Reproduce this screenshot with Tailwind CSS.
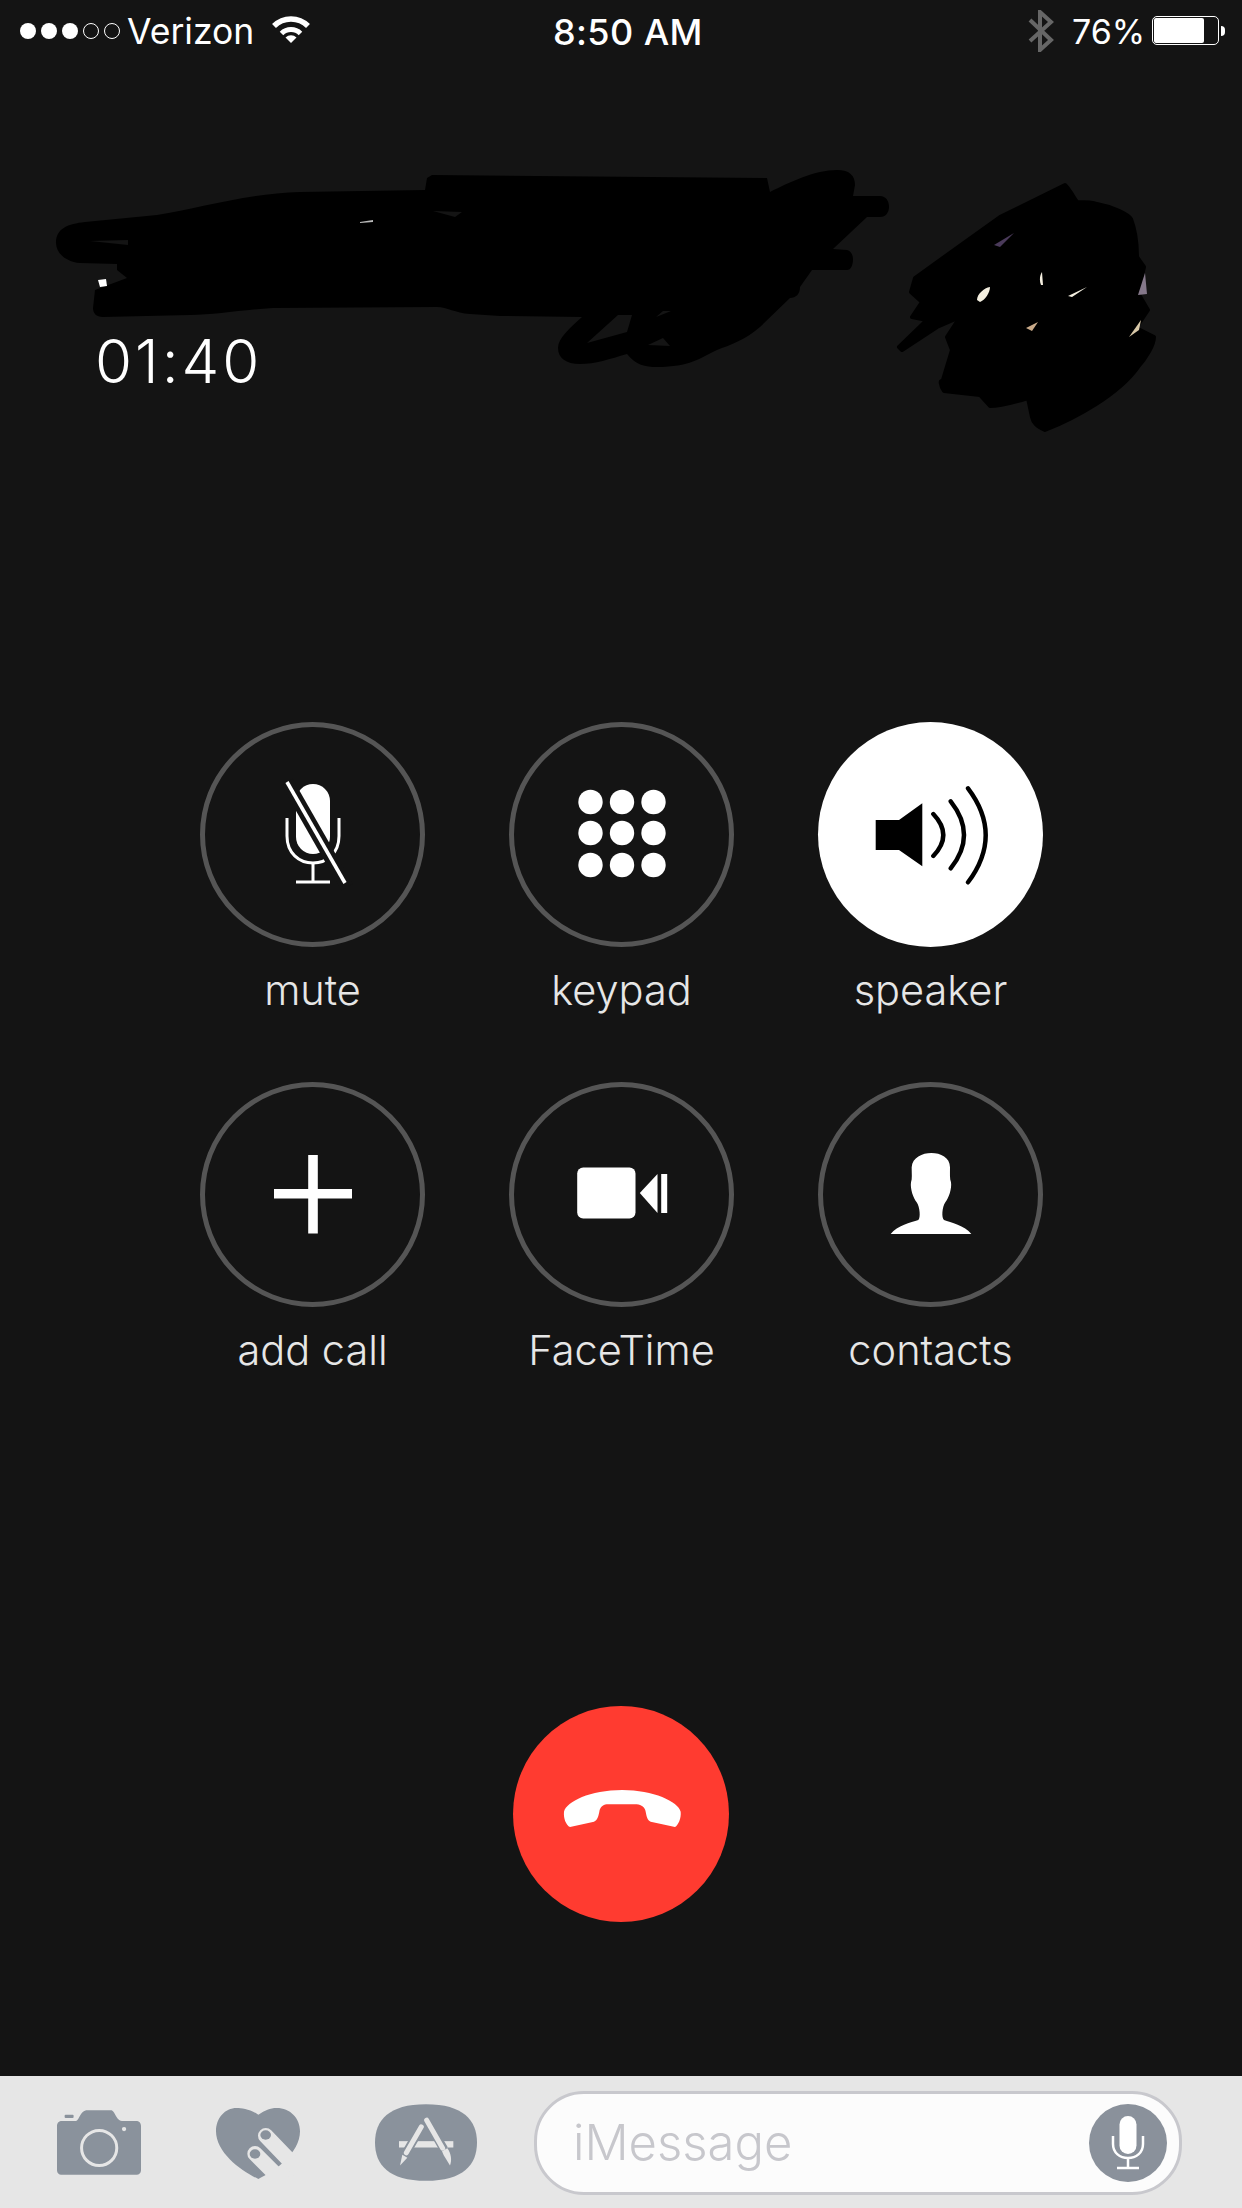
<!DOCTYPE html>
<html lang="en">
<head>
    <meta charset="utf-8"/>
    <title>Call</title>
    <script src="https://cdn.jsdelivr.net/npm/@tailwindcss/browser@4"></script>
</head>
<body class="bg-[#141414]">
<div class="relative flex flex-col w-[1242px] h-[2208px] overflow-hidden bg-[#141414] text-white font-['Inter',sans-serif]">

    <!-- status bar -->
    <div class="flex items-center h-[61px] shrink-0">
        <div class="flex items-center w-[553px] pl-[20px]">
            <div class="flex gap-[5px]">
                <span class="w-4 h-4 rounded-full bg-white"></span>
                <span class="w-4 h-4 rounded-full bg-white"></span>
                <span class="w-4 h-4 rounded-full bg-white"></span>
                <span class="w-4 h-4 rounded-full border border-white"></span>
                <span class="w-4 h-4 rounded-full border border-white"></span>
            </div>
            <span class="ml-[7px] mt-[2px] text-[35.5px] leading-[40px]">Verizon</span>
            <svg class="ml-[18px] -mt-[2px]" width="38" height="28" viewBox="-19 -27 38 28">
                <path d="M-17 -17 A24 24 0 0 1 17 -17" fill="none" stroke="#fff" stroke-width="5.5"/>
                <path d="M-9.5 -9.5 A13.5 13.5 0 0 1 9.5 -9.5" fill="none" stroke="#fff" stroke-width="5"/>
                <path d="M0 0 L-5.5 -5.5 A8 8 0 0 1 5.5 -5.5 Z" fill="#fff"/>
            </svg>
        </div>
        <div class="w-[148px] mt-[2px] text-center text-[36px] tracking-[0.4px] leading-[40px] font-medium whitespace-nowrap">8:50 AM</div>
        <div class="flex items-center ml-[327px]">
            <svg width="26" height="42" viewBox="1028 10 26 42">
                <path d="M1030 20 L1051 40 L1040 50 V12 L1051 22 L1030 41" fill="none" stroke="#666" stroke-width="4"/>
            </svg>
            <span class="ml-[18px] mt-[2px] text-[34px] leading-[40px] w-[70px] whitespace-nowrap">76%</span>
            <div class="ml-[10px] w-[67px] h-[29px] rounded-[5px] border border-white p-px">
                <div class="w-[50px] h-full bg-white rounded-[2px]"></div>
            </div>
            <div class="ml-[2px] w-[4px] h-[10px] rounded-r-full bg-white"></div>
        </div>
    </div>

    <!-- caller -->
    <div class="mt-[270px] ml-[95px] h-[60px] text-[60px] leading-[60px] tracking-[3px] font-light">01:40</div>

    <!-- redacted name and photo -->
    <svg class="absolute left-0 top-0" width="1242" height="440" viewBox="0 0 1242 440">
        <path fill="#000" d="M56 243 C56 228 68 224 85 222 L157 215 C200 208 250 193 300 192 L425 190 L427 178 L432 175 L767 178 L770 192 C790 182 815 170 837 170 C850 170 855 176 855 185 L853 196 L880 196 C886 196 889 201 889 207 C889 212 886 217 880 217 L867 217 L833 249 L847 250 C851 251 853 255 853 259 C853 265 851 270 847 270 L812 270 L800 287 C800 294 796 298 790 298 L760 327 C745 340 730 345 717 350 C700 358 690 367 657 367 C645 367 636 365 627 354 C610 359 595 364 580 364 C566 364 558 358 558 348 C558 338 570 328 582 317 L500 316 L470 314 C455 313 447 307 437 307 L273 308 C240 310 215 315 190 315 L103 317 C96 317 93 313 93 308 L95 290 L127 278 L117 270 L117 264 L80 263 C66 262 56 253 56 243 Z"/>
        <path fill="#141414" d="M587 343 L618 315 L632 315 L627 332 Z M648 345 L663 338 L670 346 Z M656 317 L663 311 L671 311 Z M90 241 L128 240 L128 245 Z M433 211 L462 212 L455 217 Z"/>
        <path fill="#fff" d="M98 280 L106 279 L107 286 L100 287 Z"/>
        <path fill="#bbb" d="M360 222 L373 220 L373 222 L360 223 Z"/>
        <path fill="#000" stroke="#000" stroke-width="4" stroke-linejoin="round" d="M1065 185 C1070 190 1074 198 1077 202 C1085 202 1092 202 1097 204 C1113 207 1128 214 1131 219 C1136 232 1137 245 1137 257 L1144 267 L1138 293 L1148 310 L1136 328 L1154 337 C1154 345 1146 358 1138 367 C1118 395 1075 418 1045 430 C1037 426 1033 423 1032 417 L1028 398 C1012 403 1000 406 990 406 L980 395 L944 391 C940 385 940 378 942 383 L952 350 L947 337 L960 317 L937 327 L902 350 L899 347 L927 320 L912 317 L922 302 L911 292 L915 278 L1000 217 Z"/>
        <path fill="#4a3a5a" d="M994 245 L1014 233 L1000 247 Z"/>
        <path fill="#f4efe0" d="M977 300 C977 294 984 288 990 287 C990 293 985 300 980 302 Z M1041 285 C1039 280 1040 275 1042 272 L1043 285 Z M1068 296 L1087 287 L1072 297 Z"/>
        <path fill="#c9aa8a" d="M1026 328 L1038 322 L1032 331 Z"/>
        <path fill="#85788a" d="M1138 295 L1145 273 L1147 294 Z"/>
        <path fill="#d8c8a8" d="M1129 337 L1141 320 L1139 330 Z"/>
    </svg>

    <!-- call controls -->
    <div class="mt-[331px] ml-[200px] grid grid-cols-[225px_225px_225px] gap-x-[84px] auto-rows-[360px]">
        <div class="flex flex-col items-center">
            <div class="flex items-center justify-center w-[225px] h-[225px] rounded-full border-[5px] border-[#555]">
                <svg width="160" height="160" viewBox="-80 -80 160 160">
                    <rect x="-17" y="-51" width="34" height="70" rx="17" fill="#fff"/>
                    <path d="M-26 -17 V1 C-26 18 -14 28 0 28 C14 28 26 18 26 1 V-17" fill="none" stroke="#fff" stroke-width="3"/>
                    <path d="M0 28 V47 M-17 47 H17" fill="none" stroke="#fff" stroke-width="3"/>
                    <path d="M-26 -53 L34 52" stroke="#141414" stroke-width="13"/>
                    <path d="M-26 -53 L32 48" stroke="#fff" stroke-width="3.6"/>
                </svg>
            </div>
            <span class="mt-[19px] text-[41.5px] leading-[48px] font-[350] text-[#e6e6e6]">mute</span>
        </div>
        <div class="flex flex-col items-center">
            <div class="flex items-center justify-center w-[225px] h-[225px] rounded-full border-[5px] border-[#555]">
                <svg width="100" height="100" viewBox="-50 -50 100 100" fill="#fff">
                    <circle cx="-31.5" cy="-33" r="12.2"/><circle cx="0" cy="-33" r="12.2"/><circle cx="31.5" cy="-33" r="12.2"/>
                    <circle cx="-31.5" cy="-2" r="12.2"/><circle cx="0" cy="-2" r="12.2"/><circle cx="31.5" cy="-2" r="12.2"/>
                    <circle cx="-31.5" cy="30" r="12.2"/><circle cx="0" cy="30" r="12.2"/><circle cx="31.5" cy="30" r="12.2"/>
                </svg>
            </div>
            <span class="mt-[19px] text-[41.5px] leading-[48px] font-[350] text-[#e6e6e6]">keypad</span>
        </div>
        <div class="flex flex-col items-center">
            <div class="flex items-center justify-center w-[225px] h-[225px] rounded-full bg-white">
                <svg width="130" height="110" viewBox="-65 -55 130 110">
                    <path d="M-55.3 -15 H-32 L-8.7 -31.7 V31.3 L-32 15 H-55.3 Z" fill="#000"/>
                    <path d="M2.3 -21 Q22.3 0 2.3 21 M19.7 -33.7 Q46.3 0 19.7 33.3 M37 -46.7 Q72.4 0 37 47.3" fill="none" stroke="#000" stroke-width="4.4" stroke-linecap="round"/>
                </svg>
            </div>
            <span class="mt-[19px] text-[41.5px] leading-[48px] font-[350] text-[#e6e6e6]">speaker</span>
        </div>
        <div class="flex flex-col items-center">
            <div class="flex items-center justify-center w-[225px] h-[225px] rounded-full border-[5px] border-[#555]">
                <svg width="100" height="100" viewBox="-50 -50 100 100" fill="#fff">
                    <rect x="-39" y="-6" width="78" height="9.5"/>
                    <rect x="-4.8" y="-40" width="9.6" height="78.5"/>
                </svg>
            </div>
            <span class="mt-[19px] text-[41.5px] leading-[48px] font-[350] text-[#e6e6e6]">add call</span>
        </div>
        <div class="flex flex-col items-center">
            <div class="flex items-center justify-center w-[225px] h-[225px] rounded-full border-[5px] border-[#555]">
                <svg width="100" height="70" viewBox="-50 -35 100 70" fill="#fff">
                    <rect x="-44.8" y="-27.5" width="58.3" height="51" rx="6"/>
                    <path d="M17.8 -2 L35.5 -21 V18 Z"/>
                    <rect x="39.2" y="-21" width="6" height="39"/>
                </svg>
            </div>
            <span class="mt-[19px] text-[41.5px] leading-[48px] font-[350] text-[#e6e6e6]">FaceTime</span>
        </div>
        <div class="flex flex-col items-center">
            <div class="flex items-center justify-center w-[225px] h-[225px] rounded-full border-[5px] border-[#555]">
                <svg width="100" height="100" viewBox="781 253 300 300">
                    <path fill="#fff" d="M810 520 C830 495 870 485 893 478 C900 472 898 440 888 425 C878 412 868 385 871 365 C875 355 873 340 873 320 C875 290 905 277 932 277 C960 277 988 290 988 320 C988 340 987 355 991 365 C994 385 984 412 974 425 C964 440 962 472 970 478 C990 485 1032 495 1052 520 Z"/>
                </svg>
            </div>
            <span class="mt-[19px] text-[41.5px] leading-[48px] font-[350] text-[#e6e6e6]">contacts</span>
        </div>
    </div>

    <!-- end call -->
    <div class="mt-[264px] mx-auto flex items-center justify-center w-[216px] h-[216px] rounded-full bg-[#ff3b30]">
        <svg width="216" height="216" viewBox="69 48 648 648">
            <path fill="#fff" d="M240 411 C228 405 220 385 222 365 C230 335 300 300 397 300 C490 300 565 335 572 365 C574 385 565 405 555 411 L482 395 C472 390 470 380 467 365 C465 352 455 345 440 343 L350 343 C338 345 330 352 328 365 C325 380 322 390 312 395 Z"/>
        </svg>
    </div>

    <!-- keyboard bar -->
    <div class="mt-auto flex items-center h-[132px] pl-[57px] bg-[#e6e6e6]">
        <svg width="84" height="65" viewBox="170 147 253 195">
            <path fill="#8a929c" d="M185 180 H225 C238 180 238 147 262 147 H332 C346 147 346 180 370 180 H408 C417 180 423 186 423 195 V327 C423 336 417 342 408 342 H185 C176 342 170 336 170 327 V195 C170 186 176 180 185 180 Z"/>
            <rect x="193" y="161" width="27" height="10" rx="3" fill="#8a929c"/>
            <circle cx="297" cy="261" r="53" fill="none" stroke="#e6e6e6" stroke-width="9"/>
            <circle cx="372" cy="204" r="6.5" fill="#e6e6e6"/>
        </svg>
        <svg class="ml-[75px] mt-[3px]" width="84" height="71" viewBox="648 145 252 213">
            <path fill="#8a929c" d="M775 165 C750 148 725 145 710 145 C675 145 648 175 648 215 C648 280 725 335 775 358 C825 335 900 280 900 215 C900 175 870 145 830 145 C810 145 795 152 775 165 Z"/>
            <path d="M797 228 L900 335 M765 282 L860 377" stroke="#e6e6e6" stroke-width="46" stroke-linecap="round" fill="none"/>
            <ellipse cx="797" cy="226" rx="16" ry="14" fill="#8a929c"/>
            <ellipse cx="765" cy="283" rx="16" ry="14" fill="#8a929c"/>
        </svg>
        <svg class="ml-[75px]" width="102" height="77" viewBox="1125 132 306 230">
            <path fill="#8a929c" d="M1278 132 C1390 132 1431 180 1431 247 C1431 314 1390 362 1278 362 C1166 362 1125 314 1125 247 C1125 180 1166 132 1278 132 Z"/>
            <rect x="1197" y="243" width="163" height="19" fill="#e6e6e6"/>
            <path d="M1265 198 L1214 286 M1280 178 L1332 268" stroke="#8a929c" stroke-width="26" fill="none"/>
            <path d="M1264 200 L1219 278 M1280 180 L1328 264" stroke="#e6e6e6" stroke-width="15" stroke-linecap="round" fill="none"/>
            <path d="M1207 284 L1222 293 L1200 316 Z" fill="#e6e6e6"/>
            <path d="M1326 273 L1342 264 C1354 280 1356 300 1350 316 C1342 300 1332 290 1326 273 Z" fill="#e6e6e6"/>
        </svg>
        <div class="ml-[57px] mt-[2px] flex items-center w-[648px] h-[104px] rounded-[50px] border-[3px] border-[#c8c8cd] bg-[#fcfcfc]">
            <span class="ml-[36px] text-[49px] leading-[60px] font-light text-[#c7c7cc]">iMessage</span>
            <div class="ml-auto mr-[12px] flex items-center justify-center w-[78px] h-[78px] rounded-full bg-[#8a919b]">
                <svg width="40" height="60" viewBox="-20 -30 40 60">
                    <rect x="-8.5" y="-27" width="17" height="38" rx="8.5" fill="#fff"/>
                    <path d="M-15 -7 V1 C-15 10 -8 15 0 15 C8 15 15 10 15 1 V-7 M0 15 V25 M-11 25 H11" fill="none" stroke="#fff" stroke-width="2.5"/>
                </svg>
            </div>
        </div>
    </div>
</div>
</body>
</html>
